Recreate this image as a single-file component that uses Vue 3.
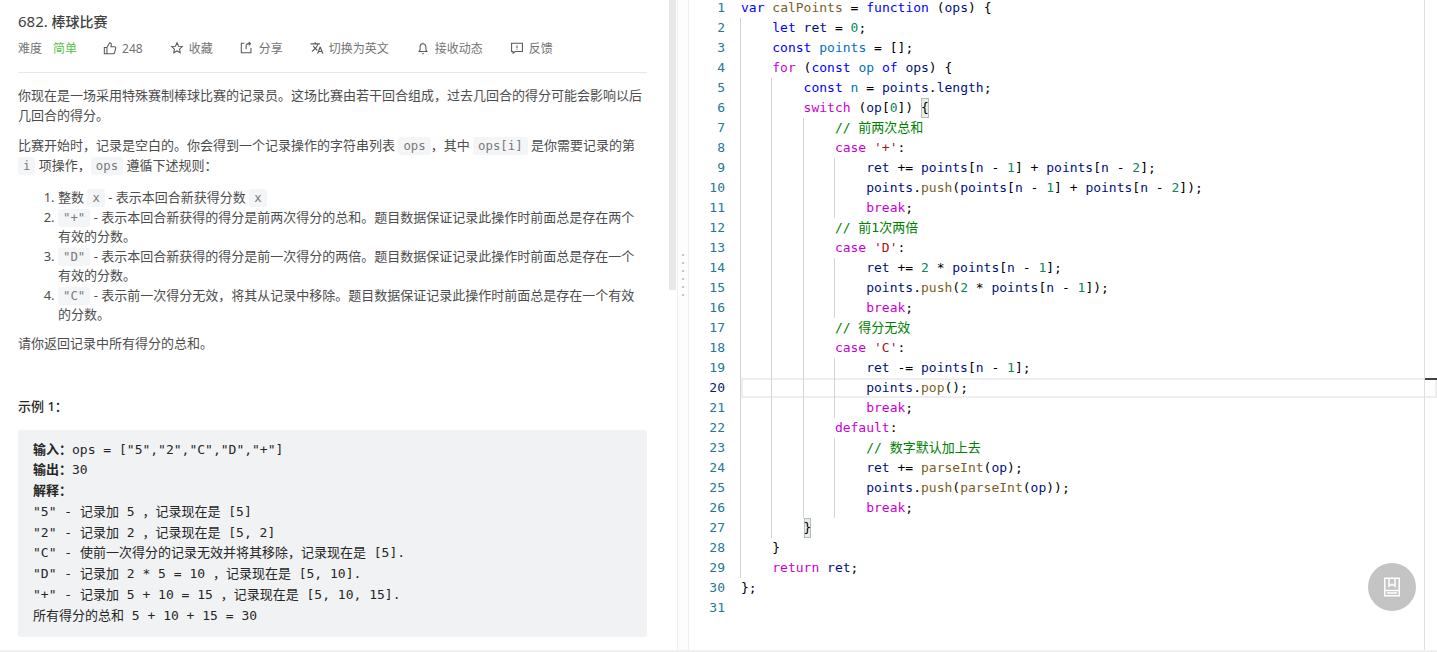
<script setup>
const src = [
  [0, 'var calPoints = function (ops) {'],
  [1, 'let ret = 0;'],
  [1, 'const points = [];'],
  [1, 'for (const op of ops) {'],
  [2, 'const n = points.length;'],
  [2, 'switch (op[0]) §{'],
  [3, '// 前两次总和'],
  [3, "case '+':"],
  [4, 'ret += points[n - 1] + points[n - 2];'],
  [4, 'points.push(points[n - 1] + points[n - 2]);'],
  [4, 'break;'],
  [3, '// 前1次两倍'],
  [3, "case 'D':"],
  [4, 'ret += 2 * points[n - 1];'],
  [4, 'points.push(2 * points[n - 1]);'],
  [4, 'break;'],
  [3, '// 得分无效'],
  [3, "case 'C':"],
  [4, 'ret -= points[n - 1];'],
  [4, 'points.pop();'],
  [4, 'break;'],
  [3, 'default:'],
  [4, '// 数字默认加上去'],
  [4, 'ret += parseInt(op);'],
  [4, 'points.push(parseInt(op));'],
  [4, 'break;'],
  [2, '§}'],
  [1, '}'],
  [1, 'return ret;'],
  [0, '};'],
  [0, ''],
]
const kw = new Set(['var', 'function', 'let', 'const', 'of'])
const ctl = new Set(['for', 'switch', 'case', 'break', 'default', 'return'])
const fn = new Set(['calPoints', 'push', 'pop', 'parseInt'])
function tokenize(text) {
  if (text.startsWith('//')) return [{ c: 'com', t: text }]
  const out = []
  const re = /§[{}]|'[^']*'|[A-Za-z_]+|\d+|\s+|./g
  let prev = ''
  for (const m of text.matchAll(re)) {
    const t = m[0]
    let c = 'pun'
    if (t[0] === '§') { out.push({ c: 'match', t: t[1] }); continue }
    if (t[0] === "'") c = 'str'
    else if (/^\d/.test(t)) c = 'num'
    else if (/^[A-Za-z_]/.test(t)) {
      if (kw.has(t)) c = 'kw'
      else if (ctl.has(t)) c = 'ctl'
      else if (fn.has(t)) c = 'fn'
      else if (prev === 'const') c = 'decl'
      else c = 'var'
      prev = t
    }
    out.push({ c, t })
  }
  return out
}
const lines = src.map(([indent, text], i) => ({ n: i + 1, indent, tokens: tokenize(text) }))
</script>

<template>
  <div class="page">
    <section class="left">
      <div class="thumb"></div>
      <h1 class="title"><span class="no">682.</span> 棒球比赛</h1>
      <div class="meta">
        <span class="label">难度</span>
        <span class="easy">简单</span>
        <span class="item">
          <svg viewBox="0 0 16 16" class="ic"><path d="M1.500 7.500h3v7h-3zM4.500 7.500 7.500 2c1.500 0 2.200 1 2 2.200L9 6.500h4.200c.9 0 1.500.8 1.300 1.700l-1.200 5c-.2.8-.8 1.300-1.600 1.300H4.500"/></svg>248
        </span>
        <span class="item">
          <svg viewBox="0 0 16 16" class="ic"><path d="m8 2 1.800 3.900 4.200.5-3.100 2.900.8 4.200L8 11.400l-3.700 2.100.8-4.200L2 6.400l4.200-.5z"/></svg>收藏
        </span>
        <span class="item">
          <svg viewBox="0 0 16 16" class="ic"><path d="M5 2.500H1.500v11h11V8M7 9.500V5.500c0-1.200.8-2.500 2.500-2.500H12M10 1l2 2-2 2" /></svg>分享
        </span>
        <span class="item">
          <svg viewBox="0 0 24 24" class="ic fill"><path d="M12.870 15.070l-2.540-2.510.03-.03A17.520 17.520 0 0 0 14.070 6H17V4h-7V2H8v2H1v2h11.170C11.500 7.920 10.440 9.750 9 11.350 8.070 10.320 7.300 9.190 6.690 8h-2c.73 1.630 1.730 3.170 2.980 4.560l-5.090 5.020L4 19l5-5 3.110 3.110.76-2.040zM18.500 10h-2L12 22h2l1.120-3h4.750L21 22h2l-4.500-12zm-2.620 7l1.620-4.330L19.120 17h-3.240z"/></svg>切换为英文
        </span>
        <span class="item">
          <svg viewBox="0 0 16 16" class="ic"><path d="M3.500 12h9l-1.200-2V6.500a3.300 3.300 0 0 0-6.600 0V10zM8 2v1M7 14.500h2"/></svg>接收动态
        </span>
        <span class="item">
          <svg viewBox="0 0 16 16" class="ic"><path d="M1.800 2.500h12.400v9.500H6l-2.500 2v-2H1.800zM8 5v3.200M8 9.400v.9"/></svg>反馈
        </span>
      </div>
      <div class="desc">
        <p>你现在是一场采用特殊赛制棒球比赛的记录员。这场比赛由若干回合组成，过去几回合的得分可能会影响以后几回合的得分。</p>
        <p class="p2">比赛开始时，记录是空白的。你会得到一个记录操作的字符串列表 <code>ops</code>，其中 <code>ops[i]</code> 是你需要记录的第 <code>i</code> 项操作，<code>ops</code> 遵循下述规则：</p>
        <ol>
          <li>整数 <code>x</code> - 表示本回合新获得分数 <code>x</code></li>
          <li><code>"+"</code> - 表示本回合新获得的得分是前两次得分的总和。题目数据保证记录此操作时前面总是存在两个有效的分数。</li>
          <li><code>"D"</code> - 表示本回合新获得的得分是前一次得分的两倍。题目数据保证记录此操作时前面总是存在一个有效的分数。</li>
          <li><code>"C"</code> - 表示前一次得分无效，将其从记录中移除。题目数据保证记录此操作时前面总是存在一个有效的分数。</li>
        </ol>
        <p>请你返回记录中所有得分的总和。</p>
        <p class="example"><strong>示例 1：</strong></p>
        <pre class="block"><b>输入：</b>ops = ["5","2","C","D","+"]
<b>输出：</b>30
<b>解释：</b>
"5" - 记录加 5 ，记录现在是 [5]
"2" - 记录加 2 ，记录现在是 [5, 2]
"C" - 使前一次得分的记录无效并将其移除，记录现在是 [5].
"D" - 记录加 2 * 5 = 10 ，记录现在是 [5, 10].
"+" - 记录加 5 + 10 = 15 ，记录现在是 [5, 10, 15].
所有得分的总和 5 + 10 + 15 = 30</pre>
      </div>
    </section>
    <div class="splitter">
      <i v-for="d in 6" :key="d"></i>
    </div>
    <section class="editor">
      <div class="code">
        <div v-for="l in lines" :key="l.n" class="line" :class="{ cur: l.n === 20 }">
          <span class="num-col" :class="{ active: l.n === 20 }">{{ l.n }}</span><span class="body"><span v-for="g in l.indent" :key="g" class="ind"></span><span v-for="(t, i) in l.tokens" :key="i" :class="t.c">{{ t.t }}</span></span>
        </div>
      </div>
      <div class="ruler"><span class="mark"></span></div>
      <button class="fab" aria-label="book">
        <svg viewBox="0 0 20 20" width="20" height="20"><path d="M2.750 1.250h14.500v17.500H2.750zM2.750 13.500h14.500M5 16h10M7 1.250v8l3-2 3 2v-8" fill="none" stroke="#fff" stroke-width="1.500"/></svg>
      </button>
    </section>
  </div>
</template>

<style scoped>
.page {
  display: flex;
  width: 1437px;
  height: 652px;
  overflow: hidden;
  background: #fff;
  border-bottom: 2px solid #f0f0f0;
  box-sizing: border-box;
  font-family: "Noto Sans", "Noto Sans CJK SC", sans-serif;
  color: #262626;
}
.left {
  position: relative;
  width: 678px;
  flex: none;
  box-sizing: border-box;
  padding: 0 30px 0 18px;
  border-right: 1px solid #eee;
  overflow: hidden;
}
.thumb {
  position: absolute;
  left: 669px;
  top: 0;
  width: 7px;
  height: 290px;
  background: #e8e8e8;
}
.title {
  margin: 12px 0 0;
  height: 20px;
  font-size: 14px;
  line-height: 20px;
  font-weight: 500;
  color: #404040;
  overflow: hidden;
}
.no { font-size: 15px; line-height: 1; font-weight: 400; }
.meta {
  display: flex;
  align-items: center;
  margin-top: 6px;
  height: 20px;
  font-size: 12px;
  color: #737373;
  gap: 27px;
}
.label { margin-right: -16px; }
.easy { color: #5cc04c; margin-right: -1px; }
.item { display: flex; align-items: center; gap: 5px; }
.ic {
  width: 14px;
  height: 14px;
  fill: none;
  stroke: #595959;
  stroke-width: 1.2;
}
.ic.fill { fill: #595959; stroke: none; }
.desc {
  margin-top: 14px;
  padding-top: 13px;
  border-top: 1px solid #e8e8e8;
  font-size: 13px;
  line-height: 19.5px;
  color: #4d4d4d;
}
p { margin: 0 0 11px; }
.p2 { margin-bottom: 13px; }
code {
  font-family: "DejaVu Sans Mono", monospace;
  font-size: 12.35px;
  line-height: 16px;
  padding: 2px 5px;
  border-radius: 3px;
  background: #f4f5f7;
  color: #7a7a7a;
}
ol { margin: 0 0 9px; padding-left: 40px; }
.example { margin: 44px 0 13px; }
strong { font-weight: 500; color: #262626; }
.block b { font-weight: 700; }
.block {
  margin: 0;
  padding: 10px 15px;
  background: #f1f2f4;
  border-radius: 3px;
  font-family: "DejaVu Sans Mono", "Noto Sans CJK SC", monospace;
  font-size: 13px;
  line-height: 20.8px;
  color: #262626;
}
.splitter {
  width: 11px;
  flex: none;
  box-sizing: border-box;
  border-right: 1px solid #eee;
  background: #fdfdfd;
  display: flex;
  flex-direction: column;
  align-items: center;
  gap: 6px;
  padding-top: 254px;
}
.splitter i { width: 2px; height: 2px; background: #c4c4c4; display: block; }
.editor {
  position: relative;
  flex: 1;
  min-width: 0;
  overflow: hidden;
}
.code {
  margin-top: -2px;
  font-family: "DejaVu Sans Mono", "Noto Sans CJK SC", monospace;
  font-size: 13px;
  line-height: 20px;
}
.line {
  display: flex;
  height: 20px;
  white-space: pre;
}
.num-col {
  width: 36px;
  flex: none;
  text-align: right;
  color: #237893;
  margin-right: 16px;
}
.num-col.active { color: #0b216f; }
.body { flex: 1; display: flex; height: 20px; }
.cur .body { box-shadow: inset 0 0 0 2px #eeeeee; }
.ind {
  width: 31.3px;
  height: 20px;
  flex: none;
  box-shadow: -1px 0 0 #d3d3d3;
}
.kw { color: #0000ff; }
.ctl { color: #c800d8; }
.fn { color: #795e26; }
.var { color: #001080; }
.decl { color: #0070c1; }
.num { color: #098658; }
.str { color: #a31515; }
.com { color: #008000; }
.pun { color: #000; }
.match {
  color: #000;
  background: #e6efe6;
  box-shadow: inset 0 0 0 1px #b9b9b9;
}
.ruler {
  position: absolute;
  left: 735px;
  top: 0;
  bottom: 0;
  width: 13px;
  border-left: 1px solid #e0e0e0;
}
.mark {
  position: absolute;
  left: 0;
  right: 0;
  top: 378px;
  height: 2px;
  background: #424242;
}
.fab {
  position: absolute;
  left: 679px;
  top: 563px;
  width: 48px;
  height: 48px;
  padding: 0;
  border: 0;
  border-radius: 50%;
  background: #c4c4c4;
  display: flex;
  align-items: center;
  justify-content: center;
}
</style>
